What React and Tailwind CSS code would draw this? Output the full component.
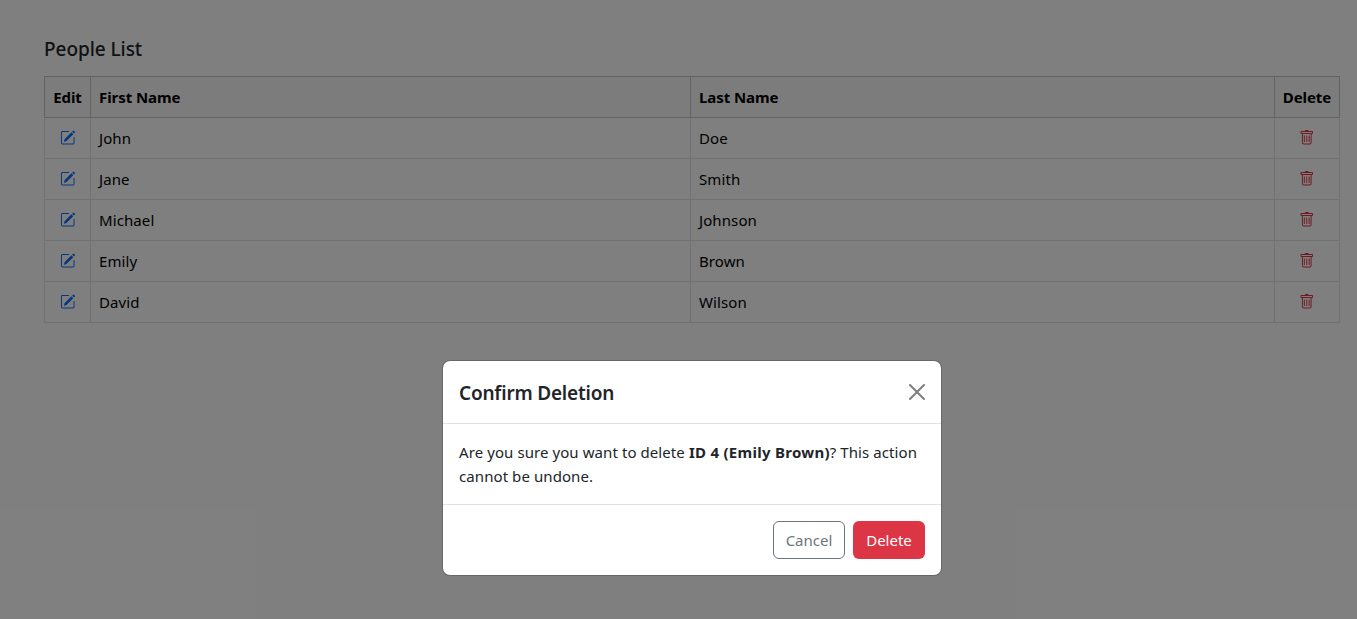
import { BsPencilSquare, BsTrash } from "react-icons/bs";

const people = [
  { id: 1, first: "John", last: "Doe" },
  { id: 2, first: "Jane", last: "Smith" },
  { id: 3, first: "Michael", last: "Johnson" },
  { id: 4, first: "Emily", last: "Brown" },
  { id: 5, first: "David", last: "Wilson" },
];

function PeopleTable() {
  return (
    <table className="w-full table-fixed border-collapse text-left text-black">
      <colgroup>
        <col className="w-[46px]" />
        <col className="w-[600px]" />
        <col className="w-[584px]" />
        <col className="w-[65px]" />
      </colgroup>
      <thead>
        <tr className="h-[41px] bg-[#f8f9fa] tracking-[-0.08px]">
          <th className="border border-[#c6c7c8] px-0 text-center font-bold">Edit</th>
          <th className="border border-[#c6c7c8] px-2 font-bold">First Name</th>
          <th className="border border-[#c6c7c8] px-2 font-bold">Last Name</th>
          <th className="border border-[#c6c7c8] px-0 text-center font-bold">Delete</th>
        </tr>
      </thead>
      <tbody>
        {people.map((p) => (
          <tr key={p.id} className="h-[41px] tracking-[0.1px]">
            <td className="border border-[#dee2e6]">
              <BsPencilSquare className="mx-auto size-[15.5px] text-[#0d6efd]" />
            </td>
            <td className="border border-[#dee2e6] px-2">{p.first}</td>
            <td className="border border-[#dee2e6] px-2">{p.last}</td>
            <td className="border border-[#dee2e6]">
              <BsTrash className="mx-auto size-[15.5px] text-[#dc3545]" />
            </td>
          </tr>
        ))}
      </tbody>
    </table>
  );
}

function ConfirmDialog() {
  return (
    <div className="w-[500px] rounded-lg border border-black/[0.175] bg-white bg-clip-padding text-[#212529]">
      <div className="flex h-[63px] items-center justify-between border-b border-[#dee2e6] px-4">
        <h5 className="pt-[3px] text-[19px] font-semibold tracking-[-0.2px]">Confirm Deletion</h5>
        <button aria-label="Close" className="opacity-50">
          <svg viewBox="0 0 16 16" className="size-4" fill="#000">
            <path d="M.293.293a1 1 0 0 1 1.414 0L8 6.586 14.293.293a1 1 0 1 1 1.414 1.414L9.414 8l6.293 6.293a1 1 0 0 1-1.414 1.414L8 9.414l-6.293 6.293a1 1 0 0 1-1.414-1.414L6.586 8 .293 1.707a1 1 0 0 1 0-1.414z" />
          </svg>
        </button>
      </div>
      <p className="p-4 leading-6 tracking-[0.08px]">
        Are you sure you want to delete <strong className="font-bold tracking-[0.28px]">ID 4 (Emily Brown)</strong>? This action
        <br />
        cannot be undone.
      </p>
      <div className="flex justify-end gap-2 border-t border-[#dee2e6] p-4">
        <button className="h-[38px] w-[72px] rounded-md border border-[#6c757d] text-[#6c757d]">Cancel</button>
        <button className="h-[38px] w-[72px] rounded-md bg-[#dc3545] text-white">Delete</button>
      </div>
    </div>
  );
}

export default function App() {
  return (
    <div className="relative h-[619px] w-full overflow-hidden bg-white font-['Noto_Sans','Open_Sans',sans-serif] text-[15px]">
      <main className="pt-9 pr-[17px] pl-11">
        <h5 className="mb-[14px] text-[19px] leading-[26px] font-medium tracking-[-0.05px] text-[#212529]">People List</h5>
        <PeopleTable />
      </main>
      <div className="absolute inset-0 flex items-start justify-center bg-black/50 pt-[360px] pl-[27px]">
        <ConfirmDialog />
      </div>
    </div>
  );
}
